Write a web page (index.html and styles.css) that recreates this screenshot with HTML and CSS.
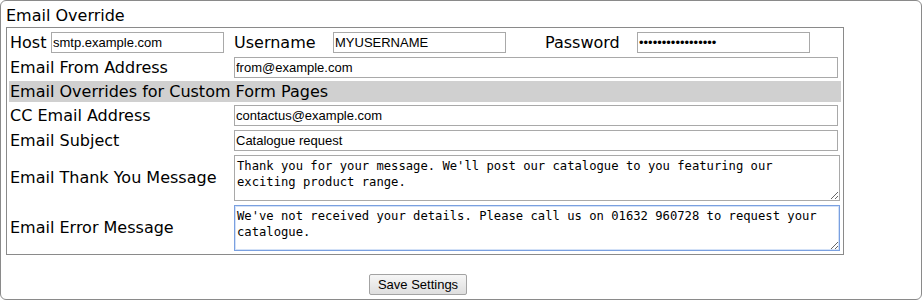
FILE: index.html
```html
<!DOCTYPE html>
<html lang="en">
<head>
    <meta charset="UTF-8">
    <title>Email Override</title>
    <link rel="stylesheet" href="styles.css">
</head>
<body>
    <div class="panel">
        <h2 class="panel-title">Email Override</h2>

        <div class="settings">
            <div class="row login-row">
                <label class="lbl host-lbl">Host</label>
                <input class="field short" type="text" value="smtp.example.com">
                <label class="lbl user-lbl">Username</label>
                <input class="field short" type="text" value="MYUSERNAME">
                <label class="lbl pass-lbl">Password</label>
                <input class="field short" type="password" value="passwordpassword1">
            </div>

            <div class="row">
                <label class="lbl col-lbl">Email From Address</label>
                <input class="field wide" type="text" value="from@example.com">
            </div>

            <div class="section-bar">Email Overrides for Custom Form Pages</div>

            <div class="row first-after-bar">
                <label class="lbl col-lbl">CC Email Address</label>
                <input class="field wide" type="text" value="contactus@example.com">
            </div>

            <div class="row">
                <label class="lbl col-lbl">Email Subject</label>
                <input class="field wide" type="text" value="Catalogue request">
            </div>

            <div class="row">
                <label class="lbl col-lbl">Email Thank You Message</label>
                <textarea class="message" spellcheck="false">Thank you for your message. We'll post our catalogue to you featuring our
exciting product range.</textarea>
            </div>

            <div class="row">
                <label class="lbl col-lbl">Email Error Message</label>
                <textarea class="message active" spellcheck="false">We've not received your details. Please call us on 01632 960728 to request your catalogue.</textarea>
            </div>
        </div>

        <div class="actions">
            <button class="save-btn" type="button">Save Settings</button>
        </div>
    </div>
</body>
</html>
```

FILE: styles.css
```css
body {
    margin: 0;
    font-family: "DejaVu Sans", Verdana, sans-serif;
    font-size: 16px;
    color: #000;
    background: #fff;
}
.panel {
    box-sizing: border-box;
    width: 922px;
    height: 300px;
    border: 1px solid #8a8a8a;
    border-radius: 6px;
    padding: 6px 0 0 5px;
}
.panel-title {
    margin: 0 0 2px 0;
    font-size: 16px;
    font-weight: normal;
    line-height: 18px;
}
.settings {
    box-sizing: border-box;
    width: 838px;
    height: 228px;
    border: 1px solid #8a8a8a;
    padding: 0 0 0 3px;
}
.row {
    display: flex;
    align-items: center;
    margin-top: 4px;
}
.first-after-bar {
    margin-top: 3px;
}
.lbl {
    line-height: 18px;
    white-space: nowrap;
}
.col-lbl {
    width: 224px;
    flex: none;
}
.host-lbl {
    width: 41px;
}
.user-lbl {
    width: 99px;
    margin-left: 10px;
}
.pass-lbl {
    width: 92px;
    margin-left: 39px;
}
.field {
    box-sizing: border-box;
    height: 21px;
    border: 1px solid #a9a9a9;
    padding: 1px 1px;
    margin: 0;
    font-family: "Liberation Sans", Arial, sans-serif;
    font-size: 13px;
    color: #000;
    background: #fff;
    outline: none;
}
.short {
    width: 173px;
}
.wide {
    width: 604px;
}
.section-bar {
    box-sizing: border-box;
    width: 832px;
    height: 21px;
    margin: 3px 0 0 -1px;
    padding-left: 1px;
    background: #d0d0d0;
    line-height: 21px;
}
.message {
    box-sizing: border-box;
    width: 606px;
    height: 46px;
    margin: 0;
    padding: 2px 2px 1px;
    border: 1px solid #a9a9a9;
    font-family: "DejaVu Sans Mono", Consolas, monospace;
    font-size: 12.2px;
    line-height: 16px;
    color: #000;
    outline: none;
    overflow: hidden;
}
.message.active {
    border-color: #7aa0e0;
    box-shadow: inset 0 0 0 1px #d3e1f7;
}
.actions {
    margin: 19px 0 0 363px;
}
.save-btn {
    box-sizing: border-box;
    width: 98px;
    height: 21px;
    padding: 0;
    border: 1px solid #a3a3a3;
    border-radius: 2px;
    background: linear-gradient(#f6f6f6, #dedede);
    font-family: "Liberation Sans", Arial, sans-serif;
    font-size: 13px;
    color: #000;
}
```
